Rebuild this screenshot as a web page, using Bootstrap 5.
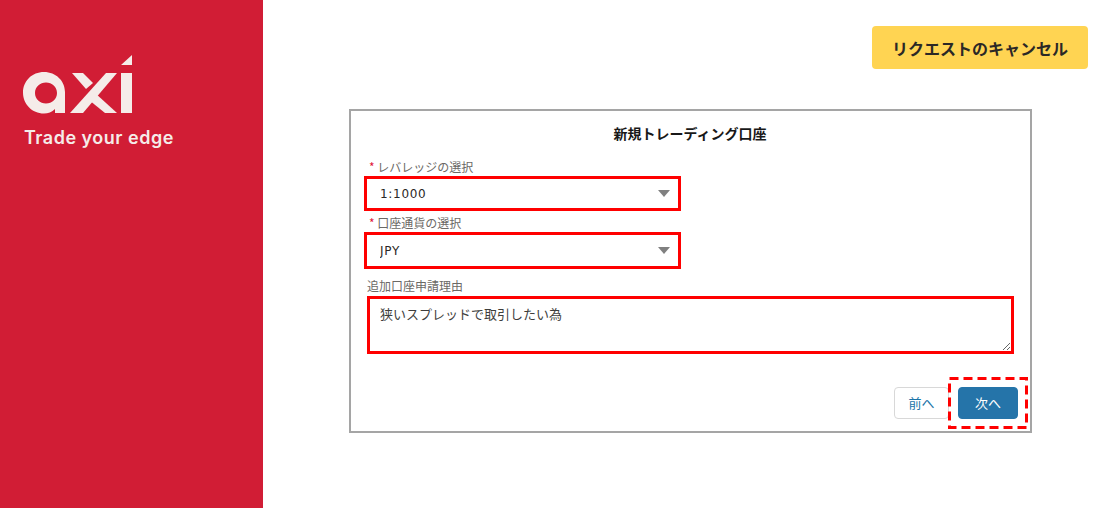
<!DOCTYPE html>
<html lang="ja">

<head>
    <meta charset="UTF-8">
    <meta name="viewport" content="width=device-width, initial-scale=1.0">
    <title>新規トレーディング口座</title>
    <link href="https://cdn.jsdelivr.net/npm/bootstrap@5.3.0/dist/css/bootstrap.min.css" rel="stylesheet">
    <style>
        body {
            font-family: "Noto Sans CJK JP", "DejaVu Sans", sans-serif;
            height: 508px;
            overflow: hidden;
            color: #3e3e3c;
        }

        .side-panel {
            width: 263px;
            background: #d11d35;
            padding-top: 55px;
        }

        .side-logo {
            display: block;
            margin-left: 23px;
        }

        .side-tag {
            margin: 12px 0 0 24px;
            font-family: "Inter", sans-serif;
            font-size: 18px;
            font-weight: 600;
            letter-spacing: .5px;
            line-height: 22px;
            color: #f5ece9;
        }

        .main-pane {
            width: 842px;
        }

        .cancel-btn {
            width: 216px;
            height: 43px;
            margin: 26px 17px 0 0;
            padding: 0;
            background: #ffd452;
            border: 0;
            border-radius: 4px;
            font-size: 16px;
            font-weight: 700;
            color: #2b2826;
        }

        .form-frame {
            width: 683px;
            height: 324px;
            margin: 40px 0 0 86px;
            border: 2px solid #a5a5a5;
            padding: 0 16px 0 13px;
        }

        .form-title {
            margin: 12px 0 15px;
            font-size: 14px;
            font-weight: 700;
            line-height: 20px;
            color: #181818;
            padding-left: 2px;
        }

        .field-label {
            display: block;
            margin: 0 0 1px 5px;
            font-size: 12px;
            line-height: 17px;
            color: #6b6966;
        }

        .field-label b {
            color: #e0173a;
            font-weight: 400;
        }

        .mark-box {
            border: 3px solid #f00;
        }

        .pick-box {
            width: 317px;
            margin-bottom: 3px;
        }

        .pick-box .form-select {
            height: 29px;
            padding: 0 0 0 13px;
            border: 0;
            border-radius: 0;
            font-family: "DejaVu Sans", sans-serif;
            font-size: 12px;
            letter-spacing: .7px;
            color: #2b2826;
            background-position: right 8px center;
            background-size: 12px 7px;
            background-image: url("data:image/svg+xml,%3csvg xmlns='http://www.w3.org/2000/svg' viewBox='0 0 12 7'%3e%3cpath fill='%23808080' d='M0 0h12L6 7z'/%3e%3c/svg%3e");
        }

        .pick-tall .form-select {
            height: 31px;
        }

        .reason-label {
            margin: 8px 0 2px 3px;
        }

        .reason-box {
            width: 647px;
            height: 58px;
            margin-left: 3px;
        }

        .reason-box .form-control {
            height: 52px;
            padding: 5px 10px;
            border: 0;
            border-radius: 0;
            font-size: 13px;
            line-height: 20px;
            color: #3e3e3c;
        }

        .step-row {
            margin: 33px -4px 0 0;
            gap: 9px;
        }

        .step-btn {
            height: 32px;
            padding: 0;
            border-radius: 4px;
            font-size: 13px;
            line-height: 30px;
        }

        .step-prev {
            width: 55px;
            background: #fff;
            border: 1px solid #d8d8d8;
            color: #1b74a8;
        }

        .step-next {
            width: 60px;
            background: #2574a9;
            border: 1px solid #2574a9;
            color: #fff;
        }

        .next-mark {
            position: absolute;
            top: -10px;
            left: -10px;
            pointer-events: none;
        }
    </style>
</head>

<body class="d-flex">
    <!-- left brand panel -->
    <aside class="side-panel flex-shrink-0">
        <svg class="side-logo" width="110" height="60" viewBox="23 55 110 60" aria-label="axi">
            <g fill="#f5ece9">
                <path fill-rule="evenodd" d="M44 72c12 0 21 9 21 20v21H55v-4c-3 3-7 4.500-11 4.500-12 0-21-9.500-21-21S32 72 44 72zm2 10.500c-6 0-11 4.500-11 10.500s5 10.500 11 10.500 11-4.500 11-10.500-5-10.500-11-10.500z"/>
                <path d="M72 73h11l10 10-7 6z"/>
                <path d="M106 73h11L83 113H70z"/>
                <path d="M95 93l22 20h-12L89 100z"/>
                <path d="M121 73h11v40h-11zM121 65l11-10v10z"/>
            </g>
        </svg>
        <p class="side-tag">Trade your edge</p>
    </aside>

    <main class="main-pane">
        <div class="d-flex justify-content-end">
            <button type="button" class="btn cancel-btn">リクエストのキャンセル</button>
        </div>

        <form class="form-frame">
            <h2 class="form-title text-center">新規トレーディング口座</h2>

            <label class="field-label" for="leverage"><b>*</b> レバレッジの選択</label>
            <div class="mark-box pick-box">
                <select class="form-select" id="leverage">
                    <option>1:1000</option>
                </select>
            </div>

            <label class="field-label" for="currency"><b>*</b> 口座通貨の選択</label>
            <div class="mark-box pick-box pick-tall">
                <select class="form-select" id="currency">
                    <option>JPY</option>
                </select>
            </div>

            <label class="field-label reason-label" for="reason">追加口座申請理由</label>
            <div class="mark-box reason-box">
                <textarea class="form-control" id="reason">狭いスプレッドで取引したい為</textarea>
            </div>

            <div class="d-flex justify-content-end step-row">
                <button type="button" class="btn step-btn step-prev">前へ</button>
                <div class="position-relative">
                    <button type="button" class="btn step-btn step-next">次へ</button>
                    <svg class="next-mark" width="80" height="52">
                        <rect x="1.5" y="1.5" width="77" height="49" fill="none" stroke="#f00" stroke-width="3" stroke-dasharray="9 5"/>
                    </svg>
                </div>
            </div>
        </form>
    </main>

    <script src="https://cdn.jsdelivr.net/npm/bootstrap@5.3.0/dist/js/bootstrap.bundle.min.js"></script>
</body>

</html>
